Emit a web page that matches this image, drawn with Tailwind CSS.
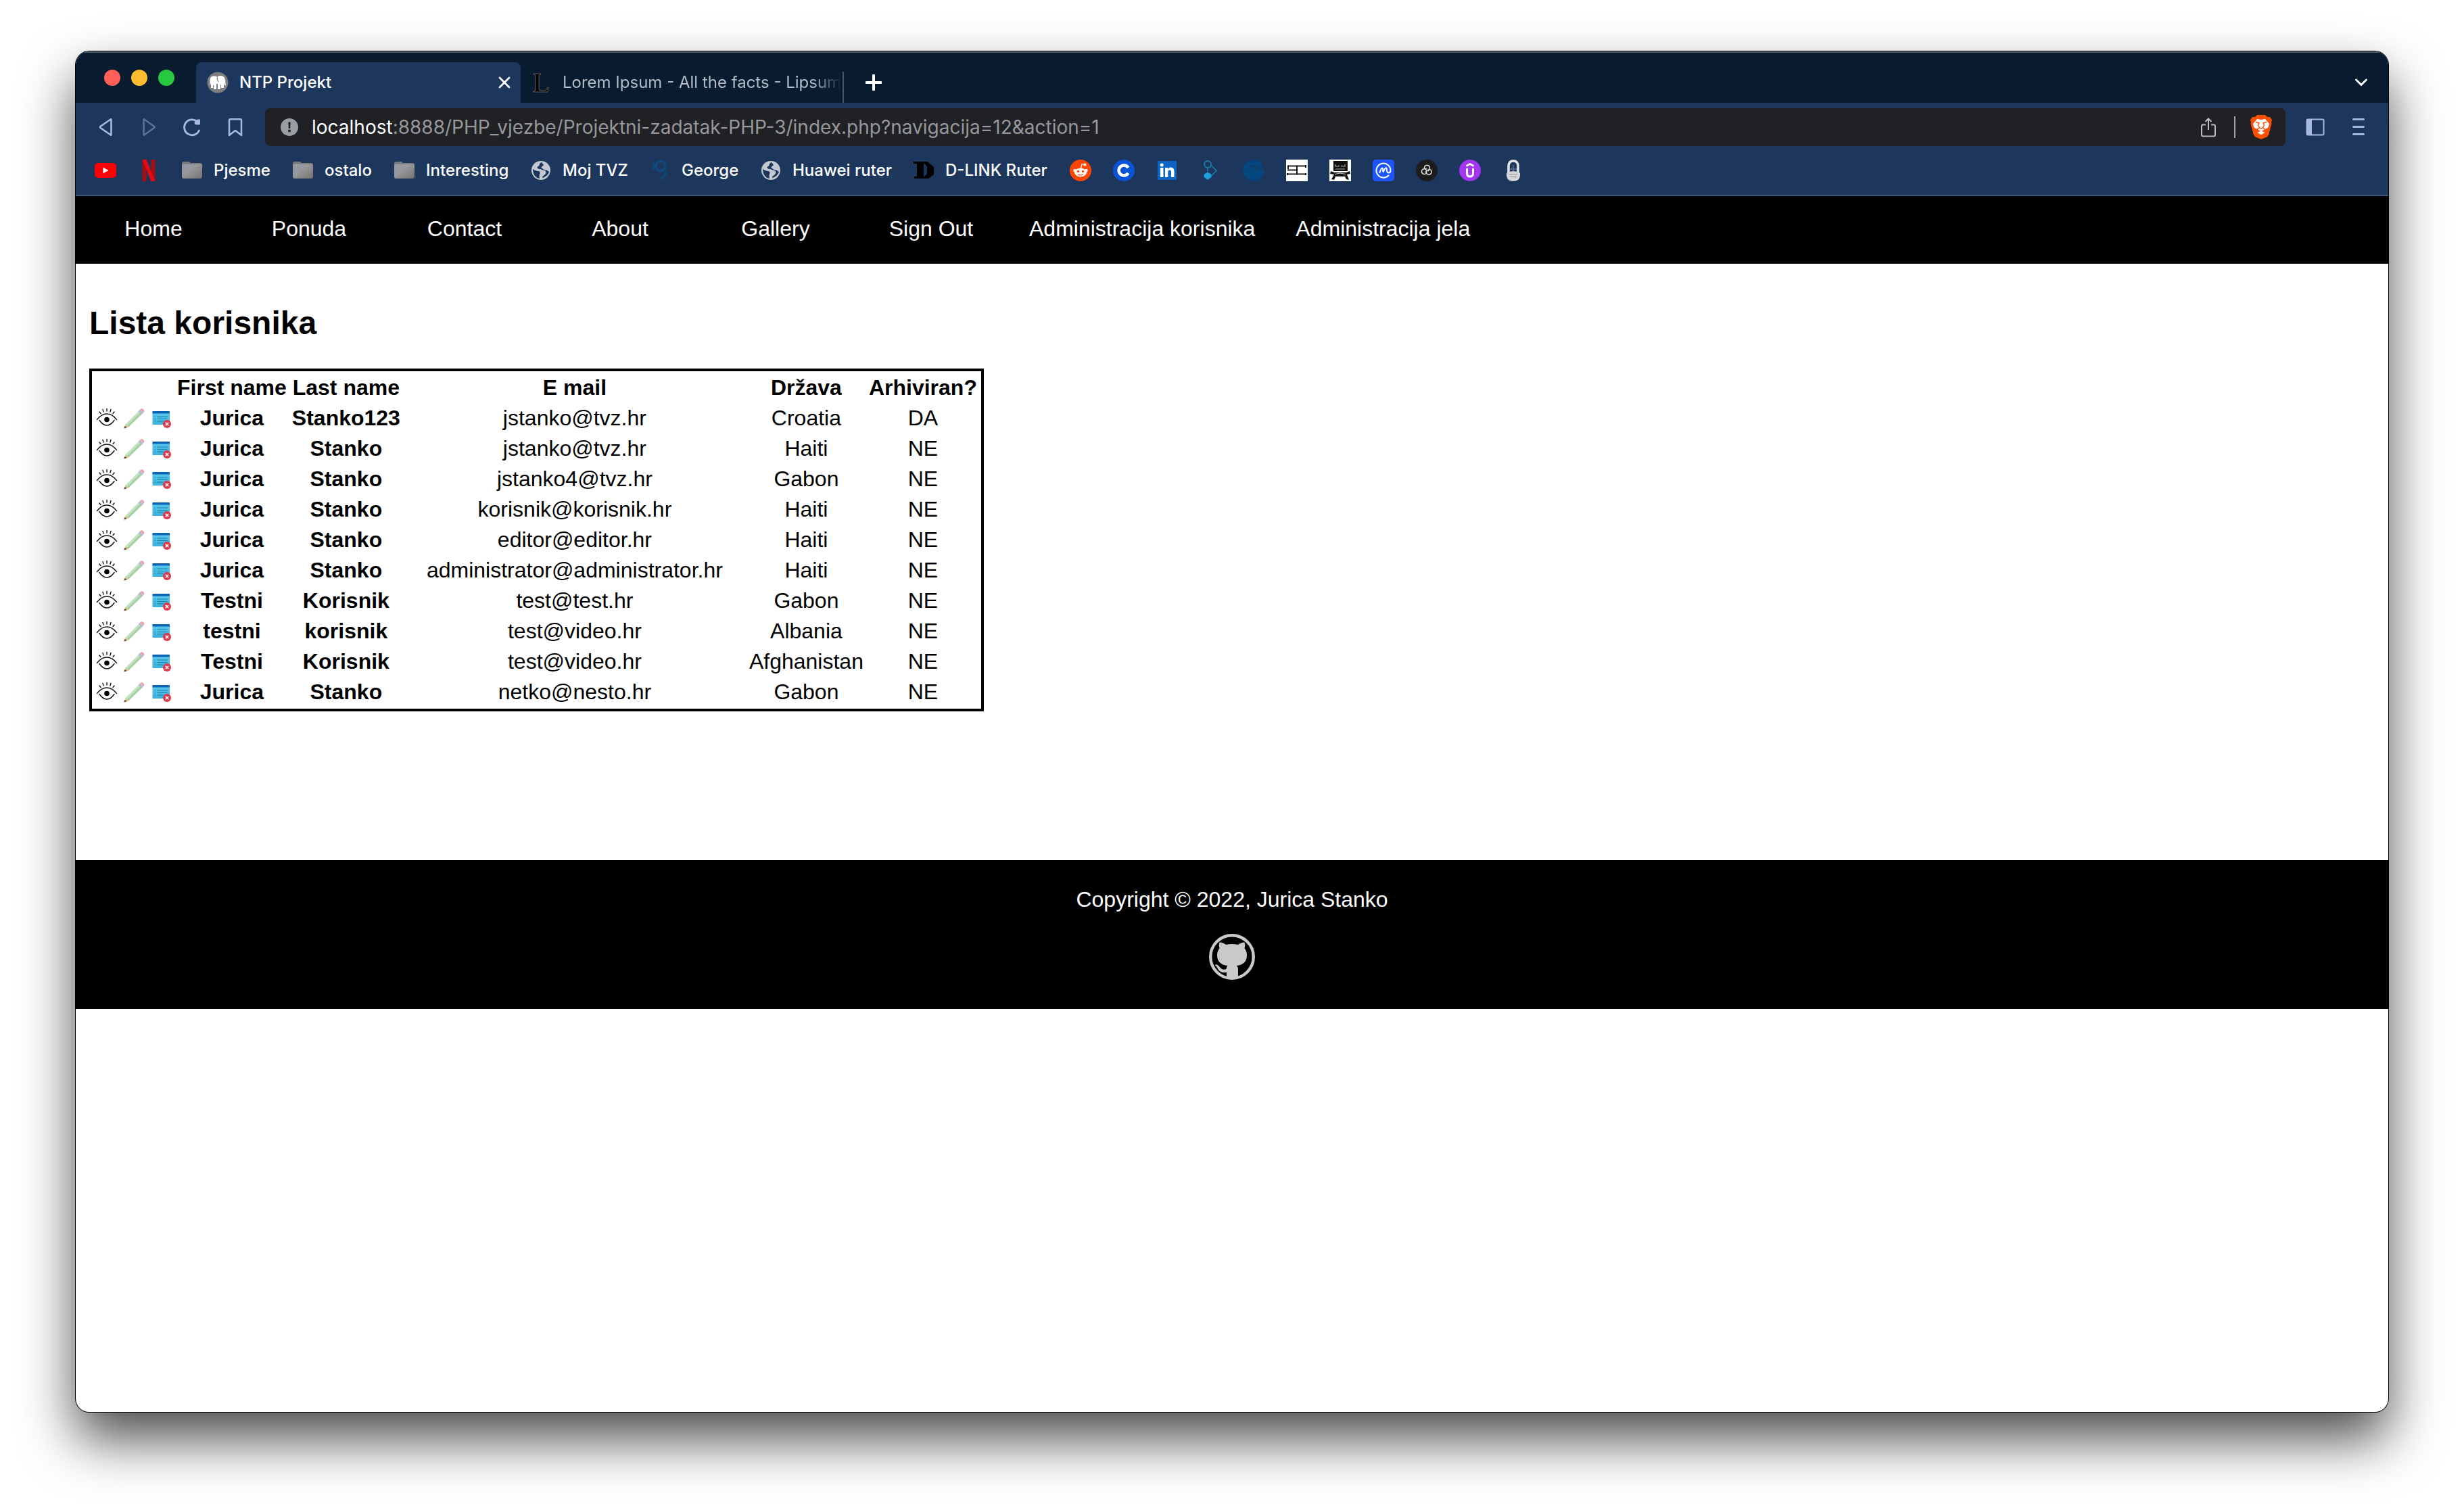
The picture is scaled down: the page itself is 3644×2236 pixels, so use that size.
<!DOCTYPE html>
<html lang="hr">
<head>
<meta charset="utf-8">
<title>NTP Projekt</title>
<script src="https://cdn.jsdelivr.net/npm/@tailwindcss/browser@4"></script>
</head>
<body class="bg-white font-['Liberation_Sans',Arial,sans-serif] text-black">
<svg class="absolute size-0" aria-hidden="true">
  <defs>
    <linearGradient id="fg" x1="0" y1="0" x2="1" y2="1"><stop offset="0" stop-color="#97989d"/><stop offset=".4" stop-color="#97989d"/><stop offset="1" stop-color="#77736f"/></linearGradient>
    <linearGradient id="rg" x1="0" y1="0" x2="0" y2="1"><stop offset="0" stop-color="#5ccdf0"/><stop offset="1" stop-color="#3bb0dc"/></linearGradient>
  </defs>
  <symbol id="folder" viewBox="0 0 32 32"><path d="M1 6q0-3 3-3h7q2 0 2.500 2h14.500q3 0 3 3v3H1z" fill="#77787c"/><rect x="1" y="6.500" width="30" height="21.500" rx="2.500" fill="url(#fg)"/></symbol>
  <symbol id="globe" viewBox="0 0 32 32"><circle cx="16" cy="16" r="14" fill="#c3c8d2"/><path d="M17 4c-5 2-2 5-5 6s-1 4 2 4 4 2 7 2 3 4 1 6-4 2-4 5c5-1 9-5 10-9-2-1-3-3-6-3s-3-2-5-3 2-2 3-4zM4 14c2 1 5 3 8 3s3 3 2 5 0 4 0 6C8 27 4 22 4 14z" fill="#1d365b"/></symbol>
  <symbol id="eye" viewBox="0 0 32 32"><g fill="none" stroke="#111" stroke-width="1.400" stroke-linecap="round"><path d="M1.500 17.500Q8 9 16 9t14.500 8.500"/><path d="M5 18.500Q10 26 16 26t11-7.500"/><path d="M16 1.500v3.500M10 2.500l1 3.500M22 2.500l-1 3.500M5 6l2 2.500M27 6l-2 2.500"/></g><circle cx="16" cy="17.500" r="3.800" fill="#000"/></symbol>
  <symbol id="pencil" viewBox="0 0 32 32"><path d="M3.500 24.500 23.500 4.500l4.500 4.500L8 28.500z" fill="#c3e2c0"/><path d="M6 26.500 26 6.500l2 2.500L8 28.500z" fill="#a5cfa6"/><path d="M1.500 30.500 3.500 24.500 8 28.500z" fill="#e0b878"/><path d="M1.500 30.500l1-3.500 3 2.200z" fill="#4a4038"/><path d="m22.500 5 2.500-2.500 5 5-2.500 2.500z" fill="#b4bcd8"/><path d="M25 2.500q2.500-2.500 5-.200t.200 5z" fill="#eba0aa"/></symbol>
  <symbol id="remove" viewBox="0 0 32 32"><rect x="3.500" y="5" width="25.500" height="20" rx="1" fill="url(#rg)"/><path d="M3.500 8.500V6q0-1 1-1h23.500q1 0 1 1v2.500z" fill="#0f63b4"/><path d="M6.500 13h1.500M6.500 16.500h1.500M6.500 20h1.500M10.500 13h15M10.500 16.500h15M10.500 20h9" stroke="#1f80ab"/><circle cx="25" cy="24" r="6" fill="#e0374c"/><path d="m22.800 21.800 4.400 4.400m0-4.400-4.400 4.400" stroke="#fff" stroke-width="1.600"/></symbol>
</svg>

<div class="px-28 pt-[76px] pb-[148px]">
<div class="flex min-h-[2012px] flex-col overflow-hidden rounded-[20px] bg-white shadow-[0_0_0_1px_#000,0_40px_80px_rgba(0,0,0,0.7)]">

  <header class="font-[Inter,sans-serif] text-white">
    <div class="flex h-19 items-end border-t-2 border-[#52616b] bg-[#081b2f]">
      <div class="flex h-[74px] w-[178px] items-center gap-4 pl-[42px]">
        <button aria-label="Close window" class="size-6 rounded-full bg-[#ff5f57]"></button>
        <button aria-label="Minimize window" class="size-6 rounded-full bg-[#febc2e]"></button>
        <button aria-label="Zoom window" class="size-6 rounded-full bg-[#28c840]"></button>
      </div>
      <div class="flex h-15 w-[480px] items-center rounded-t-lg bg-[#1d365b] pr-3.5 pl-4">
        <svg class="size-8" viewBox="0 0 32 32"><circle cx="16" cy="16" r="15.500" fill="#7d7d7d"/><path d="M4.500 21V12q.5-5 5-5.500 3.500-.5 5.500 1 2-2 6-1.500 5 .5 6 6l1 8h-2l-1-4v8h-4v-5h-1v7h-4v-8h-2v8h-4v-6h-1v4H6v-7z" fill="#fff"/><path d="M15.500 7q-1 5 1.500 8" stroke="#888" stroke-width="1.200" fill="none"/></svg>
        <span class="ml-4 grow text-2xl font-medium">NTP Projekt</span>
        <button aria-label="Close tab"><svg class="size-5" viewBox="0 0 20 20"><path d="m3 3 14 14M17 3 3 17" stroke="#fff" stroke-width="2.800" stroke-linecap="round"/></svg></button>
      </div>
      <div class="flex h-15 w-[476px] items-center pl-3.5">
        <svg class="size-8 shrink-0" viewBox="0 0 32 32"><path d="M5 3h11v1q-3 0-3 2v20q0 2 3 2h6q3 0 4-5h1l-1 7H5v-1q3 0 3-2V6q0-2-3-2z" fill="#000" stroke="#77736b" stroke-width=".8"/></svg>
        <span class="ml-4 text-2xl whitespace-nowrap text-[#b2bbc6] [mask-image:linear-gradient(to_right,#000_90%,transparent)]">Lorem Ipsum - All the facts - Lipsum</span>
      </div>
      <div class="h-[46px] w-0.5 bg-[#45566b]"></div>
      <button aria-label="New tab" class="ml-8 flex h-15 items-center"><svg class="size-6" viewBox="0 0 24 24"><path d="M12 1.500v21M1.500 12h21" stroke="#fff" stroke-width="4" stroke-linecap="round"/></svg></button>
      <button aria-label="Search tabs" class="mr-7.5 ml-auto flex h-15 items-center"><svg class="h-3 w-5" viewBox="0 0 20 12"><path d="m2.500 2 7.500 7.500L17.500 2" fill="none" stroke="#fff" stroke-width="3" stroke-linecap="round"/></svg></button>
    </div>

    <div class="flex h-18 items-center bg-[#1d365b]">
      <div class="flex w-[280px] items-center gap-8 pl-7">
        <button aria-label="Back"><svg class="size-8" viewBox="0 0 32 32"><path d="M24.500 5v22q0 1-1 .5L8.500 17q-1-1 0-2l15-10.500q1-.5 1 .5z" fill="none" stroke="#a6b9dc" stroke-width="2.600"/></svg></button>
        <button aria-label="Forward"><svg class="size-8" viewBox="0 0 32 32"><path d="M8.500 5v22q0 1 1 .5L24 17q1-1 0-2L9.500 4.500q-1-.5-1 .5z" fill="none" stroke="#5a7199" stroke-width="2.600"/></svg></button>
        <button aria-label="Reload"><svg class="size-8" viewBox="0 0 32 32"><path d="M22 6.500A11.500 11.500 0 1 0 26.500 21" fill="none" stroke="#a6b9dc" stroke-width="2.800" stroke-linecap="round"/><path d="M28 4.500V11q0 1.500-1.500 1.500h-4q-3 0-3-3.500 2-4 5-4.500z" fill="#a6b9dc"/></svg></button>
        <button aria-label="Bookmark page"><svg class="size-8" viewBox="0 0 32 32"><path d="M7 28V6q0-1.700 1.700-1.700h14.600Q25 4.300 25 6v22l-9-7z" fill="none" stroke="#a6b9dc" stroke-width="2.600" stroke-linejoin="round"/></svg></button>
      </div>
      <div class="flex h-14 grow items-center rounded-lg bg-[#202124] pr-5 pl-[23px]">
        <svg class="size-[26px]" viewBox="0 0 26 26"><circle cx="13" cy="13" r="13" fill="#9a9da3"/><path d="M11.400 5.500h3.200l-.4 9.500h-2.400z" fill="#202124"/><circle cx="13" cy="18.500" r="1.900" fill="#202124"/></svg>
        <div class="ml-5 grow text-[28px] leading-9 text-[#96989b]"><span class="text-white">localhost</span>:8888/PHP_vjezbe/Projektni-zadatak-PHP-3/index.php?navigacija=12&amp;action=1</div>
        <button aria-label="Share"><svg class="size-8" viewBox="0 0 32 32"><path d="M12 12.500H8q-2 0-2 2v13q0 2 2 2h16q2 0 2-2v-13q0-2-2-2h-4M16 20V3.500M11.500 8 16 3.500l4.500 4.500" fill="none" stroke="#bcbdc0" stroke-width="2"/></svg></button>
        <div class="mr-[22px] ml-[22px] h-8 w-0.5 bg-[#a5a6a9]"></div>
        <button aria-label="Brave Shields"><svg class="h-9 w-8" viewBox="0 0 32 36"><path d="M10 0h12l3 3h4l3 4-1 4 .5 2-4 15q-1 3-3 4.500L16 36l-8.500-3.500Q5.500 31 4.500 28L.5 13l.5-2-1-4 3-4h4z" fill="#fb4f04"/><path d="M10 6l6 1 6-1 6 7q-1 6-4 7l-3 1-2 2-3 1-3-1-2-2-3-1q-3-1-4-7z" fill="#fff"/><path d="M16 23.500l5.500 2.500L16 29.500 10.500 26z" fill="#fff"/><path d="M8 10.500l5 1.500-1.500 3 2 4-3.500 2M24 10.500l-5 1.500 1.500 3-2 4 3.500 2M13 18.500l3 2 3-2" fill="none" stroke="#fb4f04" stroke-width="1.400"/></svg></button>
      </div>
      <button aria-label="Sidebar" class="ml-7"><svg class="size-8" viewBox="0 0 32 32"><rect x="3.500" y="4.500" width="25" height="23" rx="1.500" fill="none" stroke="#a6b9dc" stroke-width="2"/><path d="M3 4h8v24H3z" fill="#a6b9dc"/></svg></button>
      <button aria-label="Menu" class="mr-7 ml-8"><svg class="size-8" viewBox="0 0 32 32"><path d="M8.500 4.500h15M8.500 15.500h15M8.500 26.500h15" stroke="#a6b9dc" stroke-width="3" stroke-linecap="round"/></svg></button>
    </div>

    <nav aria-label="Bookmarks" class="flex h-[66px] items-center gap-8 border-b-2 border-[#3d5577] bg-[#1d365b] pb-2 pl-7 text-2xl font-medium whitespace-nowrap">
      <a href="#" aria-label="YouTube"><svg class="size-8" viewBox="0 0 32 32"><rect y="5" width="32" height="22" rx="5" fill="#f00"/><path d="M12.500 11.500v9l8-4.500z" fill="#fff"/></svg></a>
      <a href="#" aria-label="Netflix"><svg class="size-8" viewBox="0 0 32 32"><path d="M6.500 0h6v32h-6zM19.500 0h6v32h-6z" fill="#a30d14"/><path d="M6.500 0h6l13 32h-6z" fill="#e50914"/></svg></a>
      <a href="#" class="flex w-[132px] items-center gap-4"><svg class="size-8 shrink-0"><use href="#folder"/></svg>Pjesme</a>
      <a href="#" class="flex w-[118px] items-center gap-4"><svg class="size-8 shrink-0"><use href="#folder"/></svg>ostalo</a>
      <a href="#" class="flex w-[170px] items-center gap-4"><svg class="size-8 shrink-0"><use href="#folder"/></svg>Interesting</a>
      <a href="#" class="flex w-36 items-center gap-4"><svg class="size-8 shrink-0"><use href="#globe"/></svg>Moj TVZ</a>
      <a href="#" class="flex w-[132px] items-center gap-4"><svg class="size-8 shrink-0" viewBox="0 0 32 32"><circle cx="17" cy="9.500" r="7" fill="none" stroke="#0d4a7c" stroke-width="3.500"/><path d="M7 5v10M25 17q-1 8-8 12" fill="none" stroke="#0d4a7c" stroke-width="3"/></svg>George</a>
      <a href="#" class="flex w-[194px] items-center gap-4"><svg class="size-8 shrink-0"><use href="#globe"/></svg>Huawei ruter</a>
      <a href="#" class="flex w-[200px] items-center gap-4"><svg class="size-8 shrink-0" viewBox="0 0 32 32"><path d="M1 3h20l10 8v11l-8 6H2v-3h4V6H1zM16 5v21l5-5v-11z" fill="#000" fill-rule="evenodd"/></svg>D-LINK Ruter</a>
      <a href="#" aria-label="Reddit"><svg class="size-8" viewBox="0 0 32 32"><circle cx="16" cy="16" r="16" fill="#ff4500"/><ellipse cx="16" cy="19" rx="9" ry="6.500" fill="#fff"/><circle cx="7.500" cy="16" r="2.200" fill="#fff"/><circle cx="24.500" cy="16" r="2.200" fill="#fff"/><circle cx="22.500" cy="7.500" r="2" fill="#fff"/><path d="m16.500 13 1.500-6.500 4.500 1" fill="none" stroke="#fff" stroke-width="1.200"/><circle cx="12.500" cy="17.500" r="1.700" fill="#ff4500"/><circle cx="19.500" cy="17.500" r="1.700" fill="#ff4500"/><path d="M12 21.500q4 3 8 0" fill="none" stroke="#ff4500" stroke-width="1.200"/></svg></a>
      <a href="#" aria-label="Coinbase"><svg class="size-8" viewBox="0 0 32 32"><circle cx="16" cy="16" r="16" fill="#0b53d6"/><path d="M22.500 12a7.500 7.500 0 1 0 0 8" fill="none" stroke="#fff" stroke-width="4.500"/></svg></a>
      <a href="#" aria-label="LinkedIn"><svg class="size-8" viewBox="0 0 32 32"><rect x="2" y="2" width="28" height="28" rx="1" fill="#0a66c2"/><path d="M6 12h4.500v14H6zM13 12h4v2q1.500-2.400 4.500-2.400 5 0 5 6V26H22v-7.500q0-3-2.300-3T17.300 18.500V26H13z" fill="#fff"/><circle cx="8.200" cy="8" r="2.500" fill="#fff"/></svg></a>
      <a href="#" aria-label="Diagrams"><svg class="size-8" viewBox="0 0 32 32"><circle cx="12" cy="7" r="5" fill="none" stroke="#1b7db0" stroke-width="1.800"/><path d="m16.500 8 8.500 8.500-7.500 7.500M12 12v6" fill="none" stroke="#1b7db0" stroke-width="1.600"/><path d="M12 18.500 17.500 22v4L12 30l-5.500-4v-4z" fill="#1f9fdd"/></svg></a>
      <a href="#" aria-label="TVZ"><svg class="size-8" viewBox="0 0 32 32"><circle cx="16" cy="16" r="15.500" fill="#04477f"/><path d="M10.500 9h6M13.500 9v6M18 9l2.500 6L23 9M25 9h6l-5 6h5" stroke="#1d365b" stroke-width="1.300" fill="none"/></svg></a>
      <a href="#" aria-label="SC"><svg class="size-8" viewBox="0 0 32 32"><path d="M0 0h32v32H0z" fill="#fff"/><path d="M2 9.500h28M2 15.500h15M2 21.500h28" stroke="#555" stroke-width="2.600"/><path d="M3 9v5M16 9v13M29 8v4M29 20v3M2 20v3" stroke="#111" stroke-width="2"/></svg></a>
      <a href="#" aria-label="Train"><svg class="size-8" viewBox="0 0 32 32"><path d="M0 0h32v32H0z" fill="#fff"/><path d="M6 2h21v15H6zM2 17l5 2h18l5-2 1 4-5 1 3 8-4-1-2-4H9l-2 5-4-1 4-7-6-1z" fill="#111"/><path d="M9 7v3h5V8.500M18 8.500V10h5V7M9 14h14" fill="none" stroke="#aaa" stroke-width="1.200"/><path d="M8 21.500q8-3 16 0" fill="none" stroke="#ccc"/></svg></a>
      <a href="#" aria-label="CoinMarketCap"><svg class="size-8" viewBox="0 0 32 32"><rect width="32" height="32" rx="5" fill="#1f55fc"/><path d="M23.500 23.500A10.500 10.500 0 1 1 26.500 16q0 3.500-2.700 3.500T21 16q0-4-1.500-3.800T16 18q-.8.500-.8-2.500 0-3-1.200-3T10.500 19" fill="none" stroke="#fff" stroke-width="2" stroke-linecap="round"/></svg></a>
      <a href="#" aria-label="Fan"><svg class="size-8" viewBox="0 0 32 32"><circle cx="16" cy="16" r="16" fill="#1c1c1c"/><g fill="none" stroke="#ddd" stroke-width="1.500"><path id="blade" d="M16 16q-5-3-3-6t6-1q3 3-1 8"/><use href="#blade" transform="rotate(120 16 16)"/><use href="#blade" transform="rotate(240 16 16)"/></g></svg></a>
      <a href="#" aria-label="Udemy"><svg class="size-8" viewBox="0 0 32 32"><circle cx="16" cy="16" r="16" fill="#a435f0"/><path d="M11.500 13v7.500q0 4.500 4.500 4.500t4.500-4.500V13" fill="none" stroke="#fff" stroke-width="3"/><path d="M10.500 9.500 16 6.500l5.500 3" fill="none" stroke="#fff" stroke-width="2.600"/></svg></a>
      <a href="#" aria-label="Lock"><svg class="size-8" viewBox="0 0 32 32"><path d="M9 20V10q0-8 7-8t7 8v10" fill="none" stroke="#e4e7ea" stroke-width="3.500"/><path d="M11 14h10M16 8v11" stroke="#5f7390" stroke-width="1.500"/><path d="M6 20q5-3 10-3t10 3v4q-1 8-10 8T6 24z" fill="#d4d6d8"/><path d="M10 22h12M11 25.500h10" stroke="#aaa" stroke-width="1.500"/></svg></a>
    </nav>
  </header>

  <nav aria-label="Main" class="flex h-25 bg-black pt-[30px] text-[32px] leading-[37px] whitespace-nowrap text-white">
    <a href="#" class="min-w-[230px] px-7.5 text-center">Home</a>
    <a href="#" class="min-w-[230px] px-7.5 text-center">Ponuda</a>
    <a href="#" class="min-w-[230px] px-7.5 text-center">Contact</a>
    <a href="#" class="min-w-[230px] px-7.5 text-center">About</a>
    <a href="#" class="min-w-[230px] px-7.5 text-center">Gallery</a>
    <a href="#" class="min-w-[230px] px-7.5 text-center">Sign Out</a>
    <a href="#" class="min-w-[230px] px-7.5 text-center">Administracija korisnika</a>
    <a href="#" class="min-w-[230px] px-7.5 text-center">Administracija jela</a>
  </nav>

  <main class="px-5 pb-[220px]">
    <h1 class="pt-15 text-5xl leading-[55px] font-bold">Lista korisnika</h1>
    <table class="mt-10 border-separate border-spacing-1 border-4 border-black text-center text-[32px] leading-[37px] whitespace-nowrap">
      <thead>
        <tr>
          <th class="p-0.5"></th><th class="p-0.5"></th><th class="p-0.5"></th>
          <th class="p-0.5">First name</th><th class="p-0.5">Last name</th><th class="w-[504px] p-0.5">E mail</th><th class="p-0.5">Država</th><th class="p-0.5">Arhiviran?</th>
        </tr>
      </thead>
      <tbody id="users"></tbody>
    </table>
  </main>

  <footer class="flex h-[220px] flex-col items-center bg-black pt-10 text-[32px] leading-[37px] text-white">
    <p>Copyright © 2022, Jurica Stanko</p>
    <a href="#" aria-label="GitHub" class="mt-8"><svg class="size-[68px]" viewBox="0 0 68 68"><circle cx="34" cy="34" r="31.800" fill="none" stroke="#c8c9cb" stroke-width="4.400"/><path d="M15.500 12.500q4 0 10 3.500 8.500-2 17 0 6-3.500 10-3.500 1.500 4 0 9 3.500 4 3.500 10 0 14-15 15.500 2 2 2 5V66H26v-9q-10 1.500-13-5.500-2-4-4-5 0-1.500 2-1.300 3 .8 5 4 3.500 5 9.500 2.800.3-3 2-5Q12 45.500 12 31.500q0-6 3.500-10-1.500-5 0-9z" fill="#c8c9cb"/></svg></a>
  </footer>
</div>
</div>

<script>
const users = [
  ["Jurica","Stanko123","jstanko@tvz.hr","Croatia","DA"],
  ["Jurica","Stanko","jstanko@tvz.hr","Haiti","NE"],
  ["Jurica","Stanko","jstanko4@tvz.hr","Gabon","NE"],
  ["Jurica","Stanko","korisnik@korisnik.hr","Haiti","NE"],
  ["Jurica","Stanko","editor@editor.hr","Haiti","NE"],
  ["Jurica","Stanko","administrator@administrator.hr","Haiti","NE"],
  ["Testni","Korisnik","test@test.hr","Gabon","NE"],
  ["testni","korisnik","test@video.hr","Albania","NE"],
  ["Testni","Korisnik","test@video.hr","Afghanistan","NE"],
  ["Jurica","Stanko","netko@nesto.hr","Gabon","NE"]
];
const action = (icon, label) => `<td class="p-0.5"><a href="#" aria-label="${label}" class="flex h-[37px] items-center"><svg class="size-8"><use href="#${icon}"/></svg></a></td>`;
document.getElementById("users").innerHTML = users.map(([first, last, mail, country, archived]) =>
  `<tr>${action("eye","Pregled")}${action("pencil","Uredi")}${action("remove","Arhiviraj")}<td class="p-0.5 font-bold">${first}</td><td class="p-0.5 font-bold">${last}</td><td class="p-0.5">${mail}</td><td class="p-0.5">${country}</td><td class="p-0.5">${archived}</td></tr>`
).join("");
</script>
</body>
</html>
